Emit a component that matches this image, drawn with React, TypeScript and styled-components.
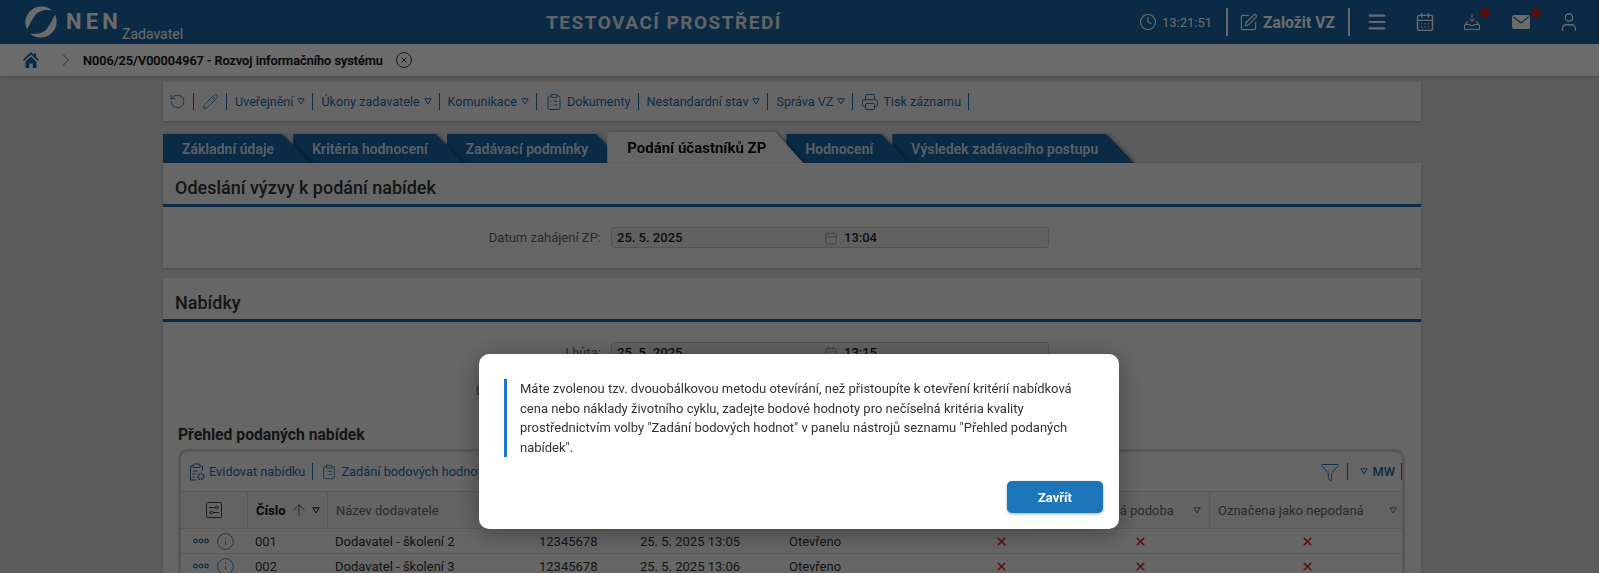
import React from 'react';
import styled, { createGlobalStyle } from 'styled-components';
import {
  ArrowUp,
  Calendar,
  CalendarDays,
  ChevronRight,
  CircleX,
  ClipboardList,
  Clock,
  Funnel,
  Info,
  Menu,
  Pencil,
  Printer,
  RotateCcw,
  SquarePen,
  User,
  X,
} from 'lucide-react';

const BLUE = '#1864a4';
const LINK = '#1f6ca8';

const GlobalStyle = createGlobalStyle`
  html, body {
    margin: 0;
    height: 573px;
    overflow: hidden;
    background: #dcdcdc;
    font-family: Roboto, "Liberation Sans", sans-serif;
    font-size: 13px;
    color: #333;
  }
  * { box-sizing: border-box; }
`;

const Header = styled.header`
  height: 44px;
  background: ${BLUE};
  color: #fff;
  display: flex;
  align-items: center;
  padding-left: 25px;
`;

const LogoBlock = styled.div`
  display: flex;
  align-items: center;
  width: 521px;
  height: 100%;
`;

const NenMark = styled.span`
  font-size: 22px;
  font-weight: 700;
  letter-spacing: 4.2px;
  margin-left: 9px;
  margin-top: -1px;
  width: 56px;
`;

const Role = styled.span`
  font-size: 14px;
  align-self: flex-end;
  margin-bottom: 2px;
`;

const EnvTitle = styled.h1`
  margin: 0;
  width: 593px;
  font-size: 19px;
  font-weight: 700;
  letter-spacing: 1.5px;
  color: #e7edf3;
`;

const HeaderTools = styled.div`
  display: flex;
  align-items: center;
  height: 100%;
`;

const Time = styled.span`
  font-size: 13px;
  margin-left: 5px;
  width: 64px;
`;

const HeaderRule = styled.span`
  width: 2px;
  height: 28px;
  background: #fff;
`;

const Create = styled.span`
  font-size: 15.7px;
  font-weight: 700;
  width: 85px;
`;

const HeaderIcon = styled.span<{ $width: number; $gap?: number; $dot?: number }>`
  position: relative;
  display: flex;
  width: ${(p) => p.$width}px;
  margin-left: ${(p) => p.$gap ?? 0}px;
  &::after {
    content: '';
    display: ${(p) => (p.$dot ? 'block' : 'none')};
    position: absolute;
    left: ${(p) => p.$dot}px;
    top: calc(50% - 14px);
    width: 10px;
    height: 10px;
    border-radius: 50%;
    background: #d21f1f;
  }
`;

const Crumbs = styled.nav`
  height: 32px;
  background: #fff;
  display: flex;
  align-items: center;
  padding-left: 23px;
  box-shadow: 0 2px 4px rgba(0, 0, 0, 0.15);
  position: relative;
`;

const CrumbArrow = styled.span`
  display: flex;
  margin: 0 7px 0 17px;
  color: #666;
`;

const CrumbText = styled.strong`
  font-size: 12.7px;
  font-weight: 500;
  color: #111;
  margin-right: 12px;
  -webkit-text-stroke: 0.2px #111;
`;

const Main = styled.main`
  padding: 6px 178px 0 163px;
`;

const ActionBar = styled.div`
  height: 39px;
  background: #f4f4f4;
  display: flex;
  align-items: center;
  padding-left: 6px;
  box-shadow: 0 1px 3px rgba(0, 0, 0, 0.2);
  color: ${LINK};
  font-size: 12.6px;
`;

const BarItem = styled.span`
  display: flex;
  align-items: center;
  gap: 4px;
  height: 17px;
  padding-right: 7px;
  margin-right: 8px;
  border-right: 1px solid ${LINK};
  white-space: nowrap;
`;

const MwItem = styled(BarItem)`
  gap: 5px;
  padding-left: 4px;
  padding-right: 6px;
  margin-right: 0;
`;

const Tabs = styled.ul`
  list-style: none;
  display: flex;
  align-items: flex-end;
  height: 31px;
  margin: 11px 0 0;
  padding: 0;
  position: relative;
  z-index: 0;
`;

const Tab = styled.li<{ $active?: boolean; $z: number }>`
  position: relative;
  z-index: ${(p) => (p.$active ? 10 : p.$z)};
  margin-left: ${(p) => (p.$z === 9 ? 0 : '-17px')};
  filter: drop-shadow(2px 1px 2px rgba(0, 0, 0, 0.45));
`;

const TabFace = styled.div<{ $active?: boolean }>`
  height: ${(p) => (p.$active ? 31 : 29)}px;
  display: flex;
  align-items: ${(p) => (p.$active ? 'flex-start' : 'center')};
  padding: ${(p) => (p.$active ? '7px 37px 0 20px' : '0 36px 0 19px')};
  background: ${(p) => (p.$active ? '#f2f2f2' : BLUE)};
  color: ${(p) => (p.$active ? '#111' : '#cfe0ee')};
  font-size: ${(p) => (p.$active ? 15 : 14)}px;
  font-weight: 700;
  clip-path: polygon(0 0, calc(100% - 28px) 0, 100% 100%, 0 100%);
`;

const Card = styled.section`
  background: #f2f2f2;
  box-shadow: 0 1px 3px rgba(0, 0, 0, 0.2);
  margin-bottom: 10px;
  position: relative;
  z-index: 1;
`;

const CardTitle = styled.h2`
  margin: 0;
  height: 44px;
  padding: 14px 12px 0;
  font-size: 18px;
  font-weight: 500;
  color: #333;
  border-bottom: 3px solid ${BLUE};
`;

const CardBody = styled.div`
  height: 61px;
  padding-top: 20px;
`;

const OfferBody = styled.div`
  padding: 20px 16px 0 15px;
`;

const FormRow = styled.div`
  display: flex;
  align-items: center;
  height: 21px;
  margin-bottom: 17px;
`;

const FieldLabel = styled.label`
  width: 448px;
  padding-right: 10px;
  text-align: right;
  font-size: 13px;
  color: #666;
`;

const OfferLabel = styled(FieldLabel)`
  width: 433px;
`;

const FieldBox = styled.div`
  width: 438px;
  height: 21px;
  display: flex;
  align-items: center;
  padding-left: 5px;
  background: #e8e8e8;
  border: 1px solid #c4c4c4;
  border-radius: 3px;
  font-weight: 500;
  color: #222;
  font-size: 13px;
`;

const DatePart = styled.span`
  width: 207px;
`;

const TimePart = styled.span`
  margin-left: 6px;
`;

const ListTitle = styled.h3`
  margin: 24px 0 5px;
  font-size: 15.7px;
  line-height: 19px;
  font-weight: 700;
  color: #333;
`;

const TableBox = styled.div`
  width: 1227px;
  border: 3px solid #cfcfcf;
  border-bottom: 0;
  border-radius: 10px 10px 0 0;
  background: #f2f2f2;
`;

const TableBar = styled.div`
  height: 40px;
  display: flex;
  align-items: center;
  padding-left: 8px;
  color: ${LINK};
  font-size: 12.8px;
  border-bottom: 1px solid #d4d4d4;
`;

const BarSpacer = styled.span`
  flex: 1;
`;

const MwLabel = styled.span`
  font-weight: 500;
`;

const GridRow = styled.div<{ $head?: boolean }>`
  display: grid;
  grid-template-columns: 66px 80px 204px 101px 149px 150px 141px 137px 196px;
  height: ${(p) => (p.$head ? 37 : 25)}px;
  align-items: center;
  border-bottom: 1px solid #d4d4d4;
  background: ${(p) => (p.$head ? '#ebebeb' : '#f2f2f2')};
`;

const HeadCell = styled.div<{ $strong?: boolean }>`
  height: 100%;
  display: flex;
  align-items: center;
  justify-content: space-between;
  padding: 0 8px;
  border-left: 1px solid #d4d4d4;
  color: ${(p) => (p.$strong ? '#111' : '#666')};
  font-weight: ${(p) => (p.$strong ? 700 : 400)};
  white-space: nowrap;
  overflow: hidden;
  &:first-child {
    justify-content: center;
    border-left: 0;
    color: #444;
  }
`;

const SortWrap = styled.span`
  display: flex;
  align-items: center;
  gap: 4px;
`;

const Cell = styled.div<{ $center?: boolean }>`
  padding-left: ${(p) => (p.$center ? 0 : 8)}px;
  display: flex;
  justify-content: ${(p) => (p.$center ? 'center' : 'flex-start')};
  color: #333;
`;

const RowTools = styled.div`
  display: flex;
  align-items: center;
  justify-content: center;
  gap: 7px;
  color: ${LINK};
`;

const Overlay = styled.div`
  position: fixed;
  inset: 0;
  z-index: 50;
  background: rgba(0, 0, 0, 0.58);
  display: flex;
  justify-content: center;
  padding-top: 354px;
`;

const Dialog = styled.div`
  width: 640px;
  height: 175px;
  margin-right: 1px;
  background: #fff;
  border-radius: 10px;
  padding: 25px 16px 16px 25px;
  box-shadow: 0 4px 24px rgba(0, 0, 0, 0.35);
  display: flex;
  flex-direction: column;
`;

const Message = styled.p`
  margin: 0;
  border-left: 3px solid #1f74d0;
  padding: 0 20px 0 13px;
  font-size: 13px;
  line-height: 19.5px;
  color: #333;
`;

const DialogFoot = styled.div`
  display: flex;
  justify-content: flex-end;
  margin-top: 24px;
`;

const CloseButton = styled.button`
  width: 96px;
  height: 32px;
  border: 0;
  border-radius: 5px;
  background: #1b75b8;
  color: #fff;
  font-family: inherit;
  font-size: 13px;
  font-weight: 700;
  box-shadow: 0 1px 3px rgba(0, 0, 0, 0.35);
`;

const Logo = () => (
  <svg width="32" height="32" viewBox="0 0 32 32" fill="#fff">
    <path d="M2 23.500A16 16 0 0 1 27 4.500C22 3.500 14 4 10 9.500 6.500 14 4.500 19 2 23.500Z" />
    <path d="M30 8.500A16 16 0 0 1 5 27.500C10 28.500 18 28 22 22.500 25.500 18 27.500 13 30 8.500Z" />
  </svg>
);

const HomeIcon = () => (
  <svg width="16" height="16" viewBox="0 0 16 16" fill={BLUE}>
    <path d="M8 0 0 7.500 1 9l7-6.400L15 9l1-1.500-3-2.800V1.200h-2v1.700Z" />
    <path d="M2.600 9.600 8 4.600l5.400 5V16H9.800v-4.400H6.200V16H2.600Z" />
  </svg>
);

const DownTriangle = () => (
  <svg width="8" height="7" viewBox="0 0 8 7" fill="none" stroke="currentColor">
    <path d="M.8.8h6.400L4 6Z" />
  </svg>
);

const InboxIcon = () => (
  <svg width="18" height="18" viewBox="0 0 18 18" fill="none" stroke="#fff" strokeWidth="1.100">
    <path d="M9 1v7.500M6.500 6 9 8.500 11.500 6" stroke="#f0c4c4" />
    <path d="M5 8.500c-1 .5-2 1.500-2.500 3h4c.5 1 1.300 1.500 2.500 1.500s2-.5 2.500-1.500h4c-.5-1.500-1.500-2.500-2.500-3" />
    <path d="M1.500 11.500v4a1 1 0 0 0 1 1h13a1 1 0 0 0 1-1v-4" />
  </svg>
);

const MailIcon = () => (
  <svg width="18" height="14" viewBox="0 0 18 14">
    <rect width="18" height="14" rx="2" fill="#fff" />
    <path d="m1.500 2 7.500 6 7.500-6" fill="none" stroke={BLUE} strokeWidth="1.100" />
  </svg>
);

const ColumnsIcon = () => (
  <svg width="16" height="16" viewBox="0 0 16 16" fill="none" stroke="currentColor">
    <rect x=".5" y=".5" width="15" height="15" rx="1" />
    <path d="M3 5.500h10M3 10.500h10" />
    <circle cx="10.500" cy="5.500" r="1.400" fill="#ebebeb" />
    <circle cx="5.500" cy="10.500" r="1.400" fill="#ebebeb" />
  </svg>
);

const RingsIcon = () => (
  <svg width="16" height="6" viewBox="0 0 16 6" fill="none" stroke="currentColor" strokeWidth="1.200">
    <circle cx="2.500" cy="3" r="1.800" />
    <circle cx="8" cy="3" r="1.800" />
    <circle cx="13.500" cy="3" r="1.800" />
  </svg>
);

const RegisterIcon = () => (
  <svg width="16" height="18" viewBox="0 0 16 18" fill="none" stroke="currentColor">
    <path d="M4 3H1.500v14h6M11 3h2.500v5" />
    <rect x="4" y="1" width="7" height="3.500" rx="1" />
    <path d="M3.500 8h5M3.500 11h3M3.500 14h2" />
    <circle cx="12" cy="13.500" r="2.800" strokeWidth="2" strokeDasharray="1.500 1" />
  </svg>
);

const tabs = [
  'Základní údaje',
  'Kritéria hodnocení',
  'Zadávací podmínky',
  'Podání účastníků ZP',
  'Hodnocení',
  'Výsledek zadávacího postupu',
];

const columns = [
  'Název dodavatele',
  'IČO',
  'Datum a čas podání',
  'Stav',
  'Elektronická podoba',
  'Listinná podoba',
  'Označena jako nepodaná',
];

const offers = [
  { id: '001', name: 'Dodavatel - školení 2', date: '25. 5. 2025 13:05' },
  { id: '002', name: 'Dodavatel - školení 3', date: '25. 5. 2025 13:06' },
];

const DateField = ({ date, time }: { date: string; time: string }) => (
  <FieldBox>
    <DatePart>{date}</DatePart>
    <Calendar size={14} strokeWidth={1} color="#777" />
    <TimePart>{time}</TimePart>
  </FieldBox>
);

const RedCross = () => <X size={13} strokeWidth={3} color="#d22" />;

export default function App() {
  return (
    <>
      <GlobalStyle />
      <Header>
        <LogoBlock>
          <Logo />
          <NenMark>NEN</NenMark>
          <Role>Zadavatel</Role>
        </LogoBlock>
        <EnvTitle>TESTOVACÍ PROSTŘEDÍ</EnvTitle>
        <HeaderTools>
          <Clock size={18} strokeWidth={1.500} />
          <Time>13:21:51</Time>
          <HeaderRule />
          <HeaderIcon $width={24} $gap={11}>
            <SquarePen size={19} strokeWidth={1.500} />
          </HeaderIcon>
          <Create>Založit VZ</Create>
          <HeaderRule />
          <HeaderIcon $width={49} $gap={16}>
            <Menu size={22} strokeWidth={2.400} />
          </HeaderIcon>
          <HeaderIcon $width={48}>
            <CalendarDays size={20} strokeWidth={1.700} />
          </HeaderIcon>
          <HeaderIcon $width={47} $dot={17}>
            <InboxIcon />
          </HeaderIcon>
          <HeaderIcon $width={46} $gap={2} $dot={19}>
            <MailIcon />
          </HeaderIcon>
          <HeaderIcon $width={22}>
            <User size={22} strokeWidth={1.400} />
          </HeaderIcon>
        </HeaderTools>
      </Header>

      <Crumbs>
        <HomeIcon />
        <CrumbArrow>
          <ChevronRight size={20} strokeWidth={1.200} />
        </CrumbArrow>
        <CrumbText>N006/25/V00004967 - Rozvoj informačního systému</CrumbText>
        <CircleX size={18} strokeWidth={1.200} color="#222" />
      </Crumbs>

      <Main>
        <ActionBar>
          <BarItem>
            <RotateCcw size={17} strokeWidth={1.200} />
          </BarItem>
          <BarItem>
            <Pencil size={17} strokeWidth={1.200} />
          </BarItem>
          <BarItem>
            Uveřejnění <DownTriangle />
          </BarItem>
          <BarItem>
            Úkony zadavatele <DownTriangle />
          </BarItem>
          <BarItem>
            Komunikace <DownTriangle />
          </BarItem>
          <BarItem>
            <ClipboardList size={18} strokeWidth={1.200} />
            Dokumenty
          </BarItem>
          <BarItem>
            Nestandardní stav <DownTriangle />
          </BarItem>
          <BarItem>
            Správa VZ <DownTriangle />
          </BarItem>
          <BarItem>
            <Printer size={18} strokeWidth={1.200} />
            Tisk záznamu
          </BarItem>
        </ActionBar>

        <Tabs>
          {tabs.map((tab, index) => (
            <Tab key={tab} $z={9 - index} $active={index === 3}>
              <TabFace $active={index === 3}>{tab}</TabFace>
            </Tab>
          ))}
        </Tabs>

        <Card>
          <CardTitle>Odeslání výzvy k podání nabídek</CardTitle>
          <CardBody>
            <FormRow>
              <FieldLabel>Datum zahájení ZP:</FieldLabel>
              <DateField date="25. 5. 2025" time="13:04" />
            </FormRow>
          </CardBody>
        </Card>

        <Card>
          <CardTitle>Nabídky</CardTitle>
          <OfferBody>
            <FormRow>
              <OfferLabel>Lhůta:</OfferLabel>
              <DateField date="25. 5. 2025" time="13:15" />
            </FormRow>
            <FormRow>
              <OfferLabel>Datum a čas otevření:</OfferLabel>
            </FormRow>
            <ListTitle>Přehled podaných nabídek</ListTitle>
            <TableBox>
              <TableBar>
                <BarItem>
                  <RegisterIcon />
                  Evidovat nabídku
                </BarItem>
                <BarItem>
                  <ClipboardList size={16} strokeWidth={1.200} />
                  Zadání bodových hodnot
                </BarItem>
                <BarSpacer />
                <BarItem>
                  <Funnel size={20} strokeWidth={1.100} />
                </BarItem>
                <MwItem>
                  <DownTriangle />
                  <MwLabel>MW</MwLabel>
                </MwItem>
              </TableBar>
              <GridRow $head>
                <HeadCell>
                  <ColumnsIcon />
                </HeadCell>
                <HeadCell $strong>
                  <SortWrap>
                    Číslo
                    <ArrowUp size={18} strokeWidth={1.200} color="#14507f" />
                    <DownTriangle />
                  </SortWrap>
                </HeadCell>
                {columns.map((column) => (
                  <HeadCell key={column}>
                    {column}
                    <DownTriangle />
                  </HeadCell>
                ))}
              </GridRow>
              {offers.map((offer) => (
                <GridRow key={offer.id}>
                  <RowTools>
                    <RingsIcon />
                    <Info size={19} strokeWidth={1} />
                  </RowTools>
                  <Cell>{offer.id}</Cell>
                  <Cell>{offer.name}</Cell>
                  <Cell>12345678</Cell>
                  <Cell>{offer.date}</Cell>
                  <Cell>Otevřeno</Cell>
                  <Cell $center>
                    <RedCross />
                  </Cell>
                  <Cell $center>
                    <RedCross />
                  </Cell>
                  <Cell $center>
                    <RedCross />
                  </Cell>
                </GridRow>
              ))}
            </TableBox>
          </OfferBody>
        </Card>
      </Main>

      <Overlay>
        <Dialog>
          <Message>
            Máte zvolenou tzv. dvouobálkovou metodu otevírání, než přistoupíte k otevření kritérií nabídková
            cena nebo náklady životního cyklu, zadejte bodové hodnoty pro nečíselná kritéria kvality
            prostřednictvím volby "Zadání bodových hodnot" v panelu nástrojů seznamu "Přehled podaných
            nabídek".
          </Message>
          <DialogFoot>
            <CloseButton>Zavřít</CloseButton>
          </DialogFoot>
        </Dialog>
      </Overlay>
    </>
  );
}
